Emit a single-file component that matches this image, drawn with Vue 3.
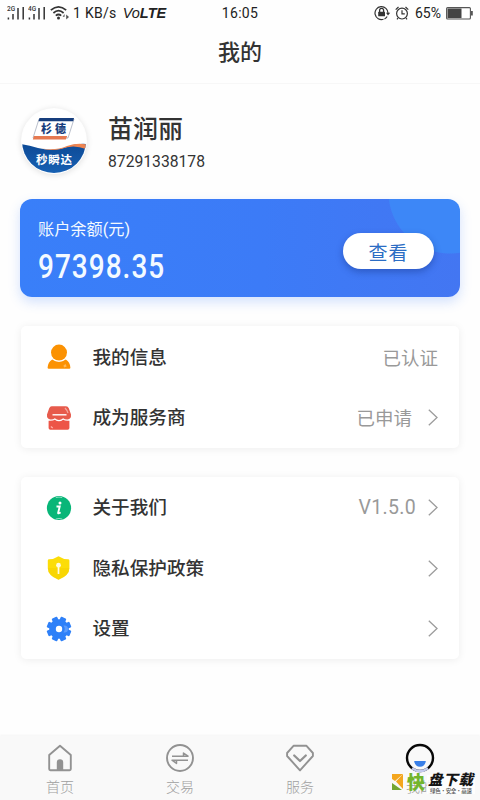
<script setup>
const groups = [
  [
    { icon: 'user', label: '我的信息', value: '已认证', arrow: false },
    { icon: 'shop', label: '成为服务商', value: '已申请', arrow: true },
  ],
  [
    { icon: 'info', label: '关于我们', value: 'V1.5.0', arrow: true, latin: true },
    { icon: 'shield', label: '隐私保护政策', value: '', arrow: true },
    { icon: 'gear', label: '设置', value: '', arrow: true },
  ],
]
const tabs = [
  { icon: 'home', label: '首页' },
  { icon: 'trade', label: '交易' },
  { icon: 'service', label: '服务' },
  { icon: 'mine', label: '我的' },
]
const teeth = [0, 45, 90, 135, 180, 225, 270, 315]
</script>

<template>
  <div class="screen">
    <div class="status">
      <div class="status-left">
        <svg v-for="net in ['2G', '4G']" :key="net" class="signal" width="21" height="16" viewBox="0 0 21 16">
          <text x="0" y="6" class="net">{{ net }}</text>
          <path d="M1.4 12.4v2.2M6 9v5.6M11 3v11.6M16.2 2v12.6" stroke="#333" stroke-width="1.5" />
        </svg>
        <svg class="wifi" width="21" height="16" viewBox="0 0 21 16" fill="none" stroke="#333" stroke-width="1.7">
          <path d="M.8 5.2Q8.5-1.6 16.2 5.2M3.4 8Q8.5 3.4 13.6 8M5.8 10.7Q8.5 8.3 11.2 10.7" />
          <circle cx="8.5" cy="12.9" r="1.5" fill="#333" stroke="none" />
          <path d="M14.6 9l-2 2.8h2zM16.2 9.6v5l2.8-2.6z" fill="#555" stroke="none" />
        </svg>
        <span class="speed">1 KB/s</span>
        <span class="volte"><i>Vo</i><b>LTE</b></span>
      </div>
      <span class="time">16:05</span>
      <div class="status-right">
        <svg width="17" height="16" viewBox="0 0 17 16" fill="none" stroke="#333" stroke-width="1.2">
          <path d="M9.5 14.3A6.5 6.5 0 1 1 14 8.2" />
          <path d="M5.6 7V5.4a2 2 0 0 1 4 0V7" stroke-width="1.3" />
          <rect x="4.2" y="6.7" width="6.8" height="4.6" rx=".6" fill="#333" stroke="none" />
          <path d="M12 7.7h4.2L14 10.5z" fill="#333" stroke="none" />
          <path d="M10.5 14q1.8-.8 2.6-2.4" />
        </svg>
        <svg class="alarm" width="14" height="14" viewBox="0 0 14 14" fill="none" stroke="#333" stroke-width="1.2">
          <circle cx="7" cy="7.6" r="5.4" />
          <path d="M7 4.2v3.7h2.8M.7 3.6L3.5 1M13.3 3.6L10.5 1M3 12l-1 1.3M11 12l1 1.3" />
        </svg>
        <span class="percent">65%</span>
        <svg width="27" height="13" viewBox="0 0 27 13">
          <rect x=".6" y=".6" width="23.8" height="11.4" rx="1" fill="#fff" stroke="#555" stroke-width="1.1" />
          <rect x="1.5" y="1.5" width="14" height="9.6" fill="#444" />
          <rect x="25" y="4" width="1.8" height="4.5" fill="#555" />
        </svg>
      </div>
    </div>

    <header class="title">我的</header>

    <main class="content">
      <section class="profile">
        <svg class="avatar" width="66" height="66" viewBox="0 0 66 66">
          <defs>
            <clipPath id="avatar-clip"><circle cx="33" cy="33" r="32" /></clipPath>
            <linearGradient id="avatar-blue" x1="0" y1="0" x2="0" y2="1">
              <stop offset="0" stop-color="#0d4a96" /><stop offset="1" stop-color="#1761b4" />
            </linearGradient>
          </defs>
          <g clip-path="url(#avatar-clip)">
            <rect width="66" height="66" fill="#fff" />
            <path d="M0 36Q8 37 17 40Q32 44 46 39Q56 35 66 36V66H0Z" fill="url(#avatar-blue)" />
            <path d="M20 40.5Q35 43 46 38Q56 34.5 66 36.5L65 41Q52 36 40 41Q30 43 20 40.5Z" fill="#ee8450" />
            <path d="M18 11H53L47 30H12Z" fill="#fff" stroke="#8c96aa" stroke-width=".6" />
            <path d="M18.5 10H53L52.2 13.2H17.5Z" fill="#173e7d" />
            <path d="M13 28H46.2L44.8 31.5H11.8Z" fill="#e67950" />
            <text x="20" y="25.4" class="logo-main">杉</text>
            <text x="34" y="25.4" class="logo-main">德</text>
            <text x="15" y="55.5" class="logo-sub" textLength="36">秒瞬达</text>
          </g>
        </svg>
        <div>
          <div class="name">苗润丽</div>
          <div class="phone">87291338178</div>
        </div>
      </section>

      <section class="balance">
        <div>
          <div class="balance-label">账户余额(元)</div>
          <div class="amount">97398.35</div>
        </div>
        <button class="view">查看</button>
      </section>

      <section v-for="(rows, g) in groups" :key="g" class="card">
        <div v-for="row in rows" :key="row.label" class="row">
          <svg class="row-icon" width="26" height="26" viewBox="0 0 26 26">
            <g v-if="row.icon === 'user'">
              <path d="M6.2 15.6Q13 20 19.8 15.6Q24 18 24.4 23.7Q24.4 24.8 23.2 24.8H2.8Q1.6 24.8 1.6 23.7Q2 18 6.2 15.6Z" fill="#fb9203" />
              <circle cx="13" cy="8.6" r="8.9" fill="#fff" />
              <circle cx="13" cy="8.6" r="8" fill="#fb9203" />
              <path d="M17.5 21.5l2-1.5 1.2 2.5-2.7 1z" fill="#ffb957" />
            </g>
            <g v-else-if="row.icon === 'shop'">
              <path d="M5.7 1.2H20Q22 1.2 22.8 3.2L25 9.5Q25.4 14 21.5 14.6Q18.9 14.8 17.2 13.2Q15.2 15 13 15Q10.8 15 8.8 13.2Q7.1 14.8 4.5 14.6Q.6 14 1 9.5L3.2 3.2Q4 1.2 5.7 1.2Z" fill="#e75b4c" />
              <path d="M2.6 15.7Q6.8 16.2 8.8 14.7Q13 18 17.2 14.7Q19.2 16.2 23.4 15.7V23Q23.4 24.8 21.6 24.8H4.4Q2.6 24.8 2.6 23Z" fill="#ed5547" />
              <path d="M6.5 9.8h14" stroke="#fff" stroke-width="1.4" />
              <path d="M19 3q2 2 3 5" stroke="#f4a69d" stroke-width="1.3" fill="none" />
              <path d="M4.8 21.5l2 1.5" stroke="#ffafa7" stroke-width="1.3" />
            </g>
            <g v-else-if="row.icon === 'info'">
              <circle cx="13" cy="13" r="12.1" fill="#08b678" />
              <path d="M9.8 2.6Q13 1.6 16.2 2.6M9.8 24Q13 22.8 16.2 24" stroke="#8adec1" stroke-width="1" fill="none" />
              <circle cx="14" cy="7.9" r="1.5" fill="#fff" />
              <path d="M10.5 11.5h3.2l-1.6 6.6q0 .8 2.6-.6" fill="none" stroke="#fff" stroke-width="1.9" />
            </g>
            <g v-else-if="row.icon === 'shield'">
              <path d="M12.5 1.2Q17 4.2 22 4.2Q23.4 4.2 23.4 5.5V13Q23.4 20.4 12.5 24.8Q1.8 20.4 1.8 13V5.5Q1.8 4.2 3.2 4.2Q8 4.2 12.5 1.2Z" fill="#fcdd08" />
              <path d="M1.8 13Q1.8 20.4 12.5 24.8Q23.4 20.4 23.4 13Z" fill="#f4cf00" opacity=".5" />
              <circle cx="12.5" cy="10.2" r="2.4" fill="#fffbe0" />
              <path d="M12.5 11v8" stroke="#fffbe0" stroke-width="1.7" />
            </g>
            <g v-else>
              <circle cx="13" cy="13" r="9.8" fill="#2e80f8" />
              <rect v-for="a in teeth" :key="a" x="10" y=".7" width="6" height="6" rx="1" fill="#2e80f8" :transform="`rotate(${a + 22.5} 13 13)`" />
              <path d="M17.5 9.5q2.5 3.5 0 7q4.5.5 4.5-3.5t-4.5-3.5" fill="#5c9cfc" />
              <circle cx="13" cy="13" r="3.2" fill="#fff" />
            </g>
          </svg>
          <span class="row-label">{{ row.label }}</span>
          <span class="row-value" :class="{ latin: row.latin, spaced: row.arrow && !row.latin }">{{ row.value }}</span>
          <svg v-if="row.arrow" class="arrow" width="10" height="17" viewBox="0 0 10 17">
            <path d="M.8.8L9 8.5L.8 16.2" fill="none" stroke="#9c9c9c" stroke-width="1.3" />
          </svg>
        </div>
      </section>
    </main>

    <nav class="tabs">
      <div v-for="tab in tabs" :key="tab.label" class="tab">
        <svg width="30" height="30" viewBox="0 0 30 30" fill="none" stroke="#929292" stroke-width="1.9" stroke-linejoin="round">
          <g v-if="tab.icon === 'home'">
            <path d="M4.2 12L15 2.8L25.8 12V26Q25.8 27.2 24.6 27.2H5.4Q4.2 27.2 4.2 26Z" />
            <path d="M11.8 27V19.5a3.2 3.2 0 0 1 6.4 0V27Z" fill="#929292" stroke="none" />
          </g>
          <g v-else-if="tab.icon === 'trade'">
            <circle cx="15" cy="15" r="13" />
            <path d="M7 13.2h16L18.5 10v3M23 17.2H7L11.5 20.4v-3" stroke-width="1.5" />
          </g>
          <g v-else-if="tab.icon === 'service'">
            <path d="M8.5 2.8H21.5L27.9 10V13L15 27.4L2.1 13V10Z" />
            <path d="M9.2 12.5L15 18L20.8 12.5" stroke-width="2.3" stroke-linecap="round" />
          </g>
          <g v-else>
            <circle cx="15" cy="15" r="13" stroke="#080808" stroke-width="2.4" />
            <path d="M7 25.2Q15 30.8 23 25.2" stroke="#c4cbed" stroke-width="2.6" />
            <path d="M9.2 18H20.8Q20 23.8 15 23.8Q10 23.8 9.2 18Z" fill="#397fe8" stroke="none" />
          </g>
        </svg>
        <span>{{ tab.label }}</span>
      </div>
    </nav>

    <svg class="watermark" width="89" height="32" viewBox="0 0 89 32">
      <rect x="36" y="4" width="48" height="19" fill="#fff" opacity=".8" />
      <path d="M1 3H12L4 10L1 8Z" fill="#f4a61e" />
      <path d="M12 3V18L5 10.5Z" fill="#f4a61e" />
      <path d="M1 12L11 19H1Z" fill="#74a632" />
      <text x="16" y="18" class="wm-fast">快</text>
      <text x="37" y="13.7" class="wm-main" textLength="45">盘下载</text>
      <text x="39" y="21.5" class="wm-sub" textLength="42">绿色·安全·高速</text>
    </svg>
  </div>
</template>

<style>
body { margin: 0; background: #fefefe; }
</style>

<style scoped>
.screen {
  position: relative;
  display: flex;
  flex-direction: column;
  width: 480px;
  height: 800px;
  overflow: hidden;
  background: #fefefe;
  color: #333;
  font-family: Roboto, "Noto Sans CJK SC", sans-serif;
}
.status {
  display: grid;
  grid-template-columns: 1fr auto 1fr;
  align-items: center;
  height: 26px;
  padding: 0 7px;
  font-size: 14px;
  color: #222;
}
.status-left, .status-right { display: flex; align-items: center; }
.status-right { justify-content: flex-end; }
.status-left { white-space: nowrap; }
.net { font: 500 6.5px Roboto, sans-serif; fill: #333; }
.wifi { margin-left: 1px; }
.speed { margin-left: 2px; letter-spacing: .3px; }
.time { letter-spacing: .3px; }
.volte { margin-left: 6px; font-family: "Liberation Sans", sans-serif; font-size: 14.5px; }
.volte b { font-style: italic; font-weight: 700; }
.alarm { margin-left: 4px; }
.percent { margin: 0 5px 0 6px; }
.title {
  height: 58px;
  line-height: 54px;
  border-bottom: 1px solid #f7f7f7;
  box-sizing: border-box;
  text-align: center;
  font-size: 22px;
  font-weight: 500;
}
.content { flex: 1; padding: 0 20px; }
.profile { display: flex; align-items: center; height: 115px; box-sizing: border-box; }
.avatar { margin: -2px 0 0 1px; border-radius: 50%; box-shadow: 0 1px 6px rgba(0, 0, 0, .12); }
.profile > div { margin-left: 21px; }
.name { margin-top: 1px; font-size: 25px; line-height: 32px; font-weight: 500; }
.phone { margin-top: 6px; font-size: 15.7px; line-height: 19px; }
.logo-main { font: 900 11px "Noto Sans CJK SC", sans-serif; fill: #173e7d; }
.logo-sub { font: 700 11.5px "Noto Sans CJK SC", sans-serif; fill: #fff; }
.balance {
  display: flex;
  justify-content: space-between;
  align-items: center;
  height: 98px;
  padding: 0 26px 0 18px;
  margin-bottom: 29px;
  box-sizing: border-box;
  border-radius: 12px;
  background:
    radial-gradient(circle at 430px -7px, #3d87f7 61px, transparent 62px),
    linear-gradient(90deg, #397ff9, #3c7bf7 55%, #4376f2);
  box-shadow: 0 5px 12px rgba(57, 123, 247, .22);
  color: #f4faff;
}
.balance-label { margin-top: 8px; font-size: 16.2px; line-height: 24px; }
.amount {
  margin-top: 6px;
  font-size: 32.5px;
  line-height: 38px;
  font-weight: 500;
  transform: scaleX(.86);
  transform-origin: left;
  letter-spacing: 1.2px;
}
.view {
  width: 91px;
  height: 36px;
  margin-top: 6px;
  padding: 0;
  border: 0;
  border-radius: 18px;
  background: #fff;
  box-shadow: 0 3px 7px rgba(20, 50, 130, .42);
  color: #2b6dc4;
  font: 400 19px "Noto Sans CJK SC", sans-serif;
  letter-spacing: 1px;
}
.card {
  margin: 0 1px 28.5px;
  padding: 1px 21px 0 25px;
  border-radius: 5px;
  background: #fff;
  box-shadow: 0 1px 9px rgba(0, 0, 0, .07);
}
.row { display: flex; align-items: center; height: 60.5px; }
.row-label { margin-left: 20.5px; font-size: 18.6px; line-height: 24px; padding-top: 1px; font-weight: 500; }
.row-value { margin-left: auto; padding-bottom: 1px; font-size: 18.5px; color: #999; }
.row-value.spaced { margin-right: 16px; }
.row-value.latin { margin-right: 12px; padding-bottom: 0; font-size: 19.5px; letter-spacing: .3px; }
.tabs {
  display: grid;
  grid-template-columns: repeat(4, 1fr);
  height: 64px;
  background: #f9f9f9;
  box-shadow: 0 -1px 2px rgba(0, 0, 0, .04);
}
.tab { display: flex; flex-direction: column; align-items: center; padding-top: 7px; }
.tab span { margin-top: 5px; font-size: 14px; line-height: 18px; font-weight: 300; color: #a0a0a0; }
.watermark { position: absolute; left: 391px; top: 771px; overflow: visible; }
.wm-fast { font: 900 18px "Noto Sans CJK SC", sans-serif; fill: #73b52c; }
.wm-main { font: italic 900 14.5px "Noto Sans CJK SC", sans-serif; fill: #151515; }
.wm-sub { font: 500 5.5px "Noto Sans CJK SC", sans-serif; fill: #555; }
</style>
